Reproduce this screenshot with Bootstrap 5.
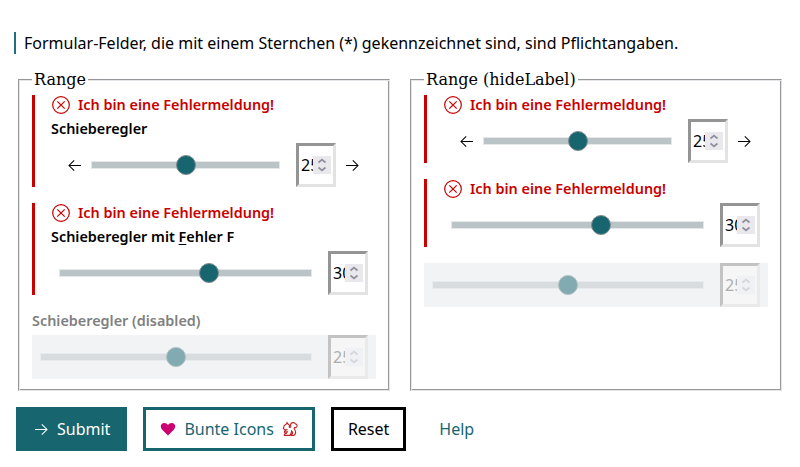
<!DOCTYPE html>
<html lang="de">
<head>
<meta charset="utf-8">
<title>Range</title>
<link href="https://cdn.jsdelivr.net/npm/bootstrap@5.3.0/dist/css/bootstrap.min.css" rel="stylesheet">
<style>
body{font-family:"Noto Sans",sans-serif;font-size:16px;line-height:24px;color:#000;background:#fff}
.intro{margin:32px 14px 0;padding-left:8px;border-left:2px solid #1c7080;height:22px;line-height:22px}
.panels{margin:14px 18px 0;gap:20px}
.panel{flex:1 1 0;min-width:0;border:1px solid;border-color:#96969b #e6e6ea #e6e6ea #96969b;box-shadow:inset 1px 1px #e6e6ea,inset -1px -1px #96969b;padding:4px 13px 11px;height:323px}
.panel legend{float:none;width:auto;margin:0;padding:0 2px;background:#fff;font:16px/23px "DejaVu Serif",serif}
.fld{margin-bottom:16px}
.fld.err{border-left:3px solid #c80000;padding-left:16px}
.msg,.lbl{font-size:14.4px;font-weight:600;height:20px;line-height:20px;margin-bottom:4px}
.msg{color:#c80000;gap:7px}
.lbl u{text-underline-offset:2px;text-decoration-thickness:1px}
.ctl{height:44px;padding:0 8px}
.track{height:8px;background:#bac4c7;border:1px solid #e4e8e9;position:relative}
.thumb{position:absolute;width:20px;height:20px;top:-7px;border-radius:50%;background:#17656f;border:1px solid #7f8c8f;margin-left:-1px}
.num{width:40px;height:44px;margin-left:16px;border:3px solid;border-color:#949494 #e3e3e3 #e3e3e3 #949494;background:#fff;padding:0 2px}
.num span{width:12px;white-space:nowrap;flex:none}
.spin{width:18px;height:18px;background:#e9e9ed;flex:none;position:relative}
.arr{flex:none}
.off .lbl{color:#808080}
.off .ctl{background:#f1f3f5}
.off .track{background:#d8dcdf;border-color:#e9ecee}
.off .thumb{background:#82abb1;border-color:#b0bfc2}
.off .num{border-color:#c3c3c3 #eaeaea #eaeaea #c3c3c3;background:#f6f6f6;color:#adadad}
.off .spin{background:#f0f1f4}
.off .spin path{stroke:#d5d6da}
.acts{margin:16px 16px 0;gap:16px}
.acts .btn{height:44px;border-radius:0;border:3px solid #17656f;padding:0 14px;font-size:16px;line-height:24px;color:#17656f;gap:8px}
.acts .b-sub{background:#17656f;color:#fff}
.acts .b-res{border-color:#000;color:#000}
.acts .b-help{border-color:transparent}
</style>
<script src="https://cdn.jsdelivr.net/npm/bootstrap@5.3.0/dist/js/bootstrap.bundle.min.js"></script>
</head>
<body>
<svg class="d-none">
<symbol id="x" viewBox="0 0 20 20"><g fill="none" stroke="#c80000" stroke-width="1.2"><circle cx="10" cy="10" r="8.300"/><path d="M6.300 6.300l7.400 7.400M13.700 6.300l-7.400 7.400"/></g></symbol>
<symbol id="right" viewBox="0 0 16 16"><path d="M2 8.500H13.800M8.800 3.300L14 8.500l-5.200 5.200" fill="none" stroke="currentColor" stroke-width="1.050"/></symbol>
<symbol id="left" viewBox="0 0 16 16"><path d="M14 8.500H2.200M7.200 3.300L2 8.500l5.200 5.200" fill="none" stroke="currentColor" stroke-width="1.050"/></symbol>
</svg>
<p class="intro">Formular-Felder, die mit einem Sternchen (*) gekennzeichnet sind, sind Pflichtangaben.</p>
<div class="panels d-flex align-items-start">
<fieldset class="panel"><legend>Range</legend>
<div class="fld err">
<div class="msg d-flex align-items-center"><svg width="20" height="20"><use href="#x"/></svg>Ich bin eine Fehlermeldung!</div>
<div class="lbl">Schieberegler</div>
<div class="ctl d-flex align-items-center"><svg class="arr mx-2" width="16" height="16"><use href="#left"/></svg><div class="track flex-grow-1"><div class="thumb" style="left:calc((100% - 18px)*.5)"></div></div><div class="num d-flex align-items-center"><span>25</span><svg class="spin" viewBox="0 0 18 18"><path d="M5.500 6.500L9 3.500l3.500 3M5.500 11.500L9 14.500l3.500-3" fill="none" stroke="#8f8f9d" stroke-width="1.700"/></svg></div><svg class="arr mx-2" width="16" height="16"><use href="#right"/></svg></div>
</div>
<div class="fld err">
<div class="msg d-flex align-items-center"><svg width="20" height="20"><use href="#x"/></svg>Ich bin eine Fehlermeldung!</div>
<div class="lbl">Schieberegler mit <u>F</u>ehler F</div>
<div class="ctl d-flex align-items-center"><div class="track flex-grow-1"><div class="thumb" style="left:calc((100% - 18px)*.6)"></div></div><div class="num d-flex align-items-center"><span>30</span><svg class="spin" viewBox="0 0 18 18"><path d="M5.500 6.500L9 3.500l3.500 3M5.500 11.500L9 14.500l3.500-3" fill="none" stroke="#8f8f9d" stroke-width="1.700"/></svg></div></div>
</div>
<div class="fld off">
<div class="lbl">Schieberegler (disabled)</div>
<div class="ctl d-flex align-items-center"><div class="track flex-grow-1"><div class="thumb" style="left:calc((100% - 18px)*.5)"></div></div><div class="num d-flex align-items-center"><span>25</span><svg class="spin" viewBox="0 0 18 18"><path d="M5.500 6.500L9 3.500l3.500 3M5.500 11.500L9 14.500l3.500-3" fill="none" stroke="#8f8f9d" stroke-width="1.700"/></svg></div></div>
</div>
</fieldset>
<fieldset class="panel"><legend>Range (hideLabel)</legend>
<div class="fld err">
<div class="msg d-flex align-items-center"><svg width="20" height="20"><use href="#x"/></svg>Ich bin eine Fehlermeldung!</div>
<div class="ctl d-flex align-items-center"><svg class="arr mx-2" width="16" height="16"><use href="#left"/></svg><div class="track flex-grow-1"><div class="thumb" style="left:calc((100% - 18px)*.5)"></div></div><div class="num d-flex align-items-center"><span>25</span><svg class="spin" viewBox="0 0 18 18"><path d="M5.500 6.500L9 3.500l3.500 3M5.500 11.500L9 14.500l3.500-3" fill="none" stroke="#8f8f9d" stroke-width="1.700"/></svg></div><svg class="arr mx-2" width="16" height="16"><use href="#right"/></svg></div>
</div>
<div class="fld err">
<div class="msg d-flex align-items-center"><svg width="20" height="20"><use href="#x"/></svg>Ich bin eine Fehlermeldung!</div>
<div class="ctl d-flex align-items-center"><div class="track flex-grow-1"><div class="thumb" style="left:calc((100% - 18px)*.6)"></div></div><div class="num d-flex align-items-center"><span>30</span><svg class="spin" viewBox="0 0 18 18"><path d="M5.500 6.500L9 3.500l3.500 3M5.500 11.500L9 14.500l3.500-3" fill="none" stroke="#8f8f9d" stroke-width="1.700"/></svg></div></div>
</div>
<div class="fld off">
<div class="ctl d-flex align-items-center"><div class="track flex-grow-1"><div class="thumb" style="left:calc((100% - 18px)*.5)"></div></div><div class="num d-flex align-items-center"><span>25</span><svg class="spin" viewBox="0 0 18 18"><path d="M5.500 6.500L9 3.500l3.500 3M5.500 11.500L9 14.500l3.500-3" fill="none" stroke="#8f8f9d" stroke-width="1.700"/></svg></div></div>
</div>
</fieldset>
</div>
<div class="acts d-flex">
<button class="btn b-sub d-flex align-items-center"><svg width="16" height="16"><use href="#right"/></svg>Submit</button>
<button class="btn d-flex align-items-center"><svg width="16" height="16" viewBox="0 0 16 16"><path d="M8 14.500L2 8.500C-.6 5.200 1.300 2 4.200 2c1.700 0 3 .8 3.800 2C8.800 2.800 10.100 2 11.800 2c2.900 0 4.800 3.200 2.200 6.500z" fill="#cc0070"/></svg>Bunte Icons<svg width="16" height="16" viewBox="0 0 16 16"><path d="M2.300 14.400c0-1.200.8-2 2.200-2.100L5.300 10.800 2.500 11.300V10.200L4.600 8.700H2.600L1.300 7.300 2.300 4.500 4.500 3 5 1.700l1.200 1.500c1.300.6 1.600 1.700 1 2.900.9.600 1.700.2 1.600-.8-.9-2 .5-3.900 2.600-3.700 1 .1 1.700.6 2 1.300 1.500.2 2 1.500 1.500 2.700-.4 1-1.400 1.200-2.400 1-.8.700-.3 1.500.4 2.400 1.100 1.700.8 3.900-.9 5.400H9.300c-.1-.8.400-1.400 1.200-1.600.4-1.200.1-2.200-.9-2.900-.1 1.700-.5 3-1.600 4.500z" fill="none" stroke="#c02020" stroke-width="1.100"/></svg></button>
<button class="btn b-res">Reset</button>
<button class="btn b-help">Help</button>
</div>
</body>
</html>
